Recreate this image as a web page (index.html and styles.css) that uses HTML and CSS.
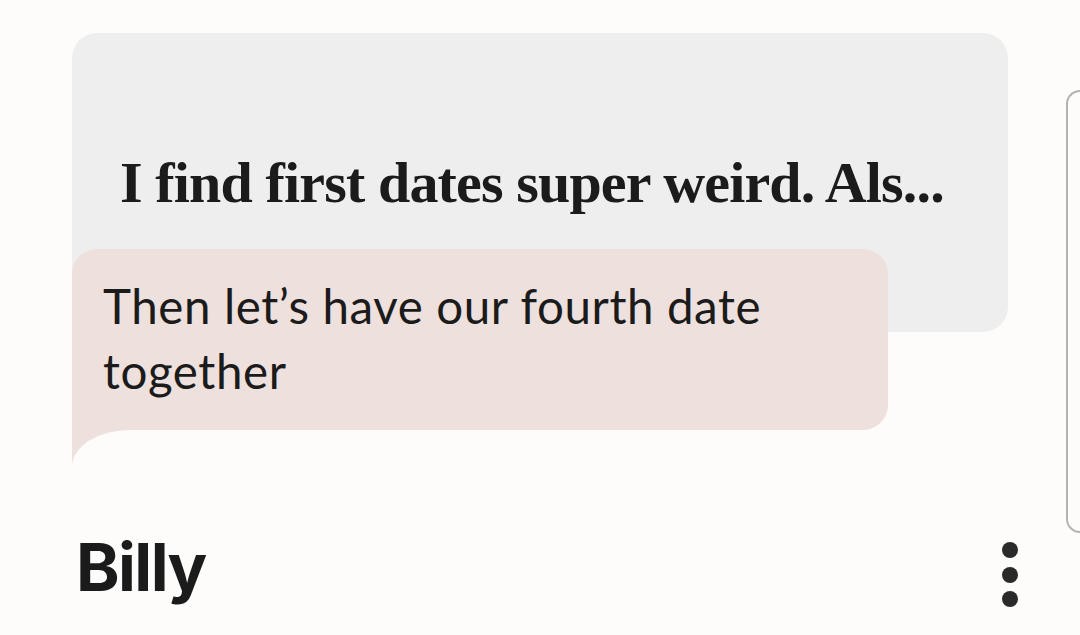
FILE: index.html
```html
<!DOCTYPE html>
<html lang="en">
<head>
<meta charset="utf-8">
<title>Billy</title>
<link rel="stylesheet" href="styles.css">
</head>
<body>
<div class="page">
  <main class="main">
    <section class="prompt-card">
      <p class="prompt-text">I find first dates super weird. Als...</p>
    </section>
    <div class="bubble">
      <p class="bubble-text">Then let’s have our fourth date together</p>
    </div>
    <div class="tail"><div class="tail-cut"></div></div>
    <div class="profile-row">
      <h1 class="name">Billy</h1>
      <div class="more" aria-label="More options">
        <span class="dot"></span>
        <span class="dot"></span>
        <span class="dot"></span>
      </div>
    </div>
  </main>
  <aside class="peek"></aside>
</div>
</body>
</html>
```
FILE: styles.css
```css
html, body {
  margin: 0;
  padding: 0;
  background: #fdfcfb;
  height: 100%;
  overflow: hidden;
}
.page {
  display: flex;
  align-items: flex-start;
  width: 1080px;
  height: 635px;
}
.main {
  box-sizing: border-box;
  width: 1018px;
  flex: none;
  padding: 33px 0 0 72px;
}
.prompt-card {
  box-sizing: border-box;
  width: 936px;
  height: 299px;
  background: #eeeeee;
  border-radius: 25px;
  display: flex;
  align-items: center;
  padding: 0 0 0 48px;
}
.prompt-text {
  margin: 0;
  font-family: "Liberation Serif", serif;
  font-weight: 700;
  font-size: 58px;
  letter-spacing: -0.85px;
  color: #1b1b1b;
  white-space: nowrap;
}
.bubble {
  position: relative;
  box-sizing: border-box;
  width: 816px;
  height: 181px;
  margin-top: -83px;
  background: #ede0dd;
  border-radius: 25px 25px 25px 0;
  padding: 24px 31px 0 31px;
}
.bubble-text {
  margin: 0;
  font-family: Lato, sans-serif;
  font-size: 47.5px;
  line-height: 65px;
  letter-spacing: 0.6px;
  color: #1b1b1b;
}
.tail {
  width: 58px;
  height: 37px;
  background: #ede0dd;
}
.tail-cut {
  width: 100%;
  height: 100%;
  background: #fdfcfb;
  border-top-left-radius: 58px 37px;
}
.profile-row {
  display: flex;
  justify-content: space-between;
  align-items: flex-start;
  margin-top: 66px;
}
.name {
  margin: 0 0 0 4px;
  font-family: Inter, sans-serif;
  font-weight: 700;
  font-size: 66px;
  line-height: 69px;
  letter-spacing: -1.6px;
  color: #1b1b1b;
}
.more {
  display: flex;
  flex-direction: column;
  gap: 8.5px;
  margin-top: 9px;
}
.dot {
  display: block;
  width: 16px;
  height: 16px;
  border-radius: 50%;
  background: #2a2a2a;
}
.peek {
  flex: 1;
  box-sizing: border-box;
  margin: 90px 0 0 48px;
  height: 443px;
  border: 2px solid #b3b3b3;
  border-right: none;
  border-radius: 18px 0 0 18px;
}
```
